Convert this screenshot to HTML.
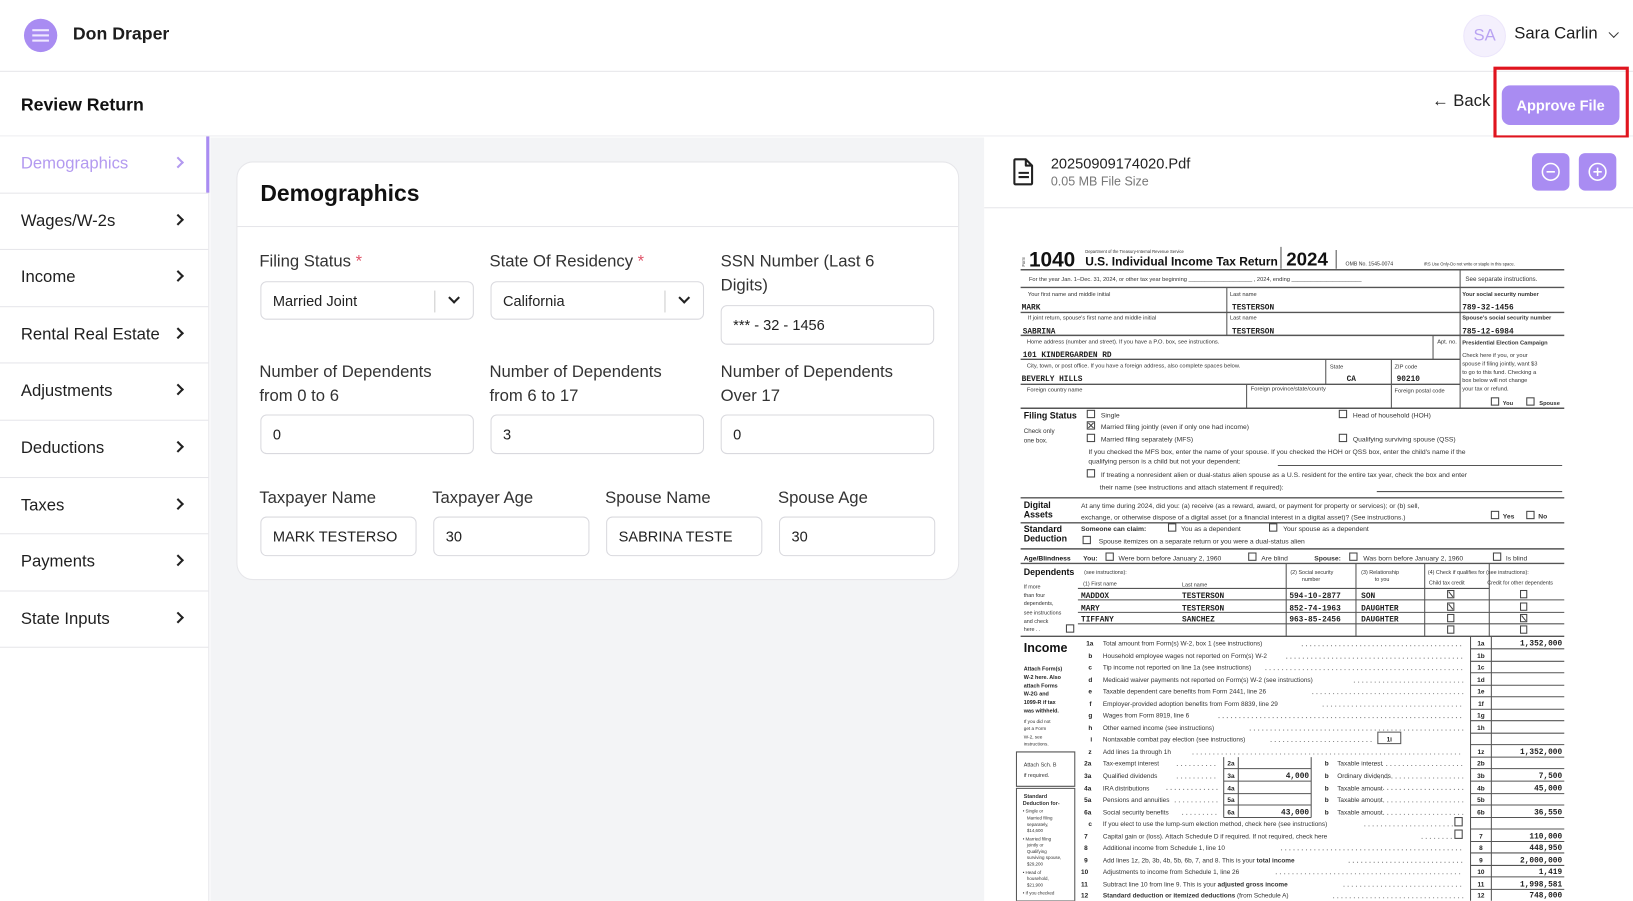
<!DOCTYPE html>
<html><head><meta charset="utf-8">
<style>
*{box-sizing:border-box;margin:0;padding:0}
html,body{width:1633px;height:900px;overflow:hidden;background:#fff;font-family:"Liberation Sans",sans-serif;color:#1f1f1f}
#root{position:absolute;left:0;top:0;width:1568px;height:865px;transform:scale(1.04145);transform-origin:0 0;background:#fff}
.abs{position:absolute}
.hdr{left:0;top:0;width:1568px;height:69px;border-bottom:1px solid #e6e6ea}
.sub{left:0;top:69px;width:1568px;height:62px;border-bottom:1px solid #ececf0}
.side{left:0;top:131px;width:201px;height:734px;border-right:1px solid #e6e6ea;background:#fff}
.item{position:absolute;left:0;width:200px;height:54.6px;border-bottom:1px solid #e6e6ea;font-size:16px;line-height:54px;padding-left:20px}
.item .chev{position:absolute;left:167px;top:21px;width:8px;height:8px;border-right:2px solid #222;border-top:2px solid #222;transform:rotate(45deg)}
.main{left:202px;top:132px;width:743px;height:733px;background:#f3f4f6}
.card{left:227px;top:155px;width:694px;height:402px;background:#fff;border:1px solid #e6e6ea;border-radius:16px}
.lbl{position:absolute;font-size:16px;color:#333;line-height:23px}
.lbl .st{color:#e0556a}
.inp{position:absolute;border:1px solid #d9d9de;border-radius:6px;height:38px;font-size:14px;line-height:36px;padding-left:11px;color:#222;background:#fff;overflow:hidden;white-space:nowrap}
.sel .bar{position:absolute;right:36px;top:8px;width:1px;height:21px;background:#ccc}
.sel .dc{position:absolute;right:14px;top:11px;width:8px;height:8px;border-right:2px solid #222;border-bottom:2px solid #222;transform:rotate(45deg)}
.pbtn{background:#a98cf2;border-radius:6px}
</style></head><body>
<div id="root">
 <div class="abs hdr">
  <div class="abs" style="left:23px;top:18px;width:32px;height:32px;border-radius:50%;background:#a98cf2"></div>
  <div class="abs" style="left:31px;top:28px;width:16px;height:2px;background:#efe8ff;box-shadow:0 5px 0 #efe8ff,0 10px 0 #efe8ff"></div>
  <div class="abs" style="left:70px;top:23px;font-size:17px;font-weight:bold;color:#1d1d1d">Don Draper</div>
  <div class="abs" style="left:1405px;top:14px;width:41px;height:41px;border-radius:50%;background:#f4f0fd;border:1px solid #ece6fb;color:#b9a3f2;font-size:16px;text-align:center;line-height:39px">SA</div>
  <div class="abs" style="left:1454px;top:24px;font-size:16px;color:#1d1d1d">Sara Carlin</div>
  <div class="abs" style="left:1546px;top:28px;width:7px;height:7px;border-right:1.6px solid #333;border-bottom:1.6px solid #333;transform:rotate(45deg)"></div>
 </div>
 <div class="abs sub">
  <div class="abs" style="left:20px;top:22px;font-size:17px;font-weight:bold;color:#111">Review Return</div>
  <div class="abs" style="left:1375px;top:20px;font-size:16px;color:#222">&#8592; Back</div>
  <div class="abs pbtn" style="left:1442px;top:13px;width:113px;height:38px;border-radius:8px;color:#fff;font-weight:bold;font-size:14px;text-align:center;line-height:38px">Approve File</div>
  <div class="abs" style="left:1434px;top:-5px;width:130px;height:69px;border:3px solid #e0141e"></div>
 </div>
 <div class="abs side">
  <div class="item" style="top:0;color:#b39af0">Demographics<span class="chev" style="border-color:#b39af0"></span></div>
  <div class="item" style="top:54.6px">Wages/W-2s<span class="chev"></span></div>
  <div class="item" style="top:109.2px">Income<span class="chev"></span></div>
  <div class="item" style="top:163.8px">Rental Real Estate<span class="chev"></span></div>
  <div class="item" style="top:218.4px">Adjustments<span class="chev"></span></div>
  <div class="item" style="top:273px">Deductions<span class="chev"></span></div>
  <div class="item" style="top:327.6px">Taxes<span class="chev"></span></div>
  <div class="item" style="top:382.2px">Payments<span class="chev"></span></div>
  <div class="item" style="top:436.8px">State Inputs<span class="chev"></span></div>
  <div class="abs" style="left:198px;top:0;width:3px;height:54px;background:#a98cf2"></div>
 </div>
 <div class="abs main"></div>
 <div class="abs card">
  <div class="abs" style="left:22px;top:17px;font-size:22px;font-weight:bold;color:#111">Demographics</div>
  <div class="abs" style="left:0;top:61px;width:692px;height:1px;background:#e6e6ea"></div>
 </div>
 <div class="lbl" style="left:249px;top:240px">Filing Status <span class="st">*</span></div>
 <div class="lbl" style="left:470px;top:240px">State Of Residency <span class="st">*</span></div>
 <div class="lbl" style="left:692px;top:240px">SSN Number (Last 6<br>Digits)</div>
 <div class="inp sel" style="left:250px;top:270px;width:205px;height:37px">Married Joint<span class="bar"></span><span class="dc"></span></div>
 <div class="inp sel" style="left:471px;top:270px;width:205px;height:37px">California<span class="bar"></span><span class="dc"></span></div>
 <div class="inp" style="left:692px;top:293px;width:205px">*** - 32 - 1456</div>
 <div class="lbl" style="left:249px;top:346px">Number of Dependents<br>from 0 to 6</div>
 <div class="lbl" style="left:470px;top:346px">Number of Dependents<br>from 6 to 17</div>
 <div class="lbl" style="left:692px;top:346px">Number of Dependents<br>Over 17</div>
 <div class="inp" style="left:250px;top:398px;width:205px">0</div>
 <div class="inp" style="left:471px;top:398px;width:205px">3</div>
 <div class="inp" style="left:692px;top:398px;width:205px">0</div>
 <div class="lbl" style="left:249px;top:467px">Taxpayer Name</div>
 <div class="lbl" style="left:415px;top:467px">Taxpayer Age</div>
 <div class="lbl" style="left:581px;top:467px">Spouse Name</div>
 <div class="lbl" style="left:747px;top:467px">Spouse Age</div>
 <div class="inp" style="left:250px;top:496px;width:150px">MARK TESTERSO</div>
 <div class="inp" style="left:416px;top:496px;width:150px">30</div>
 <div class="inp" style="left:582px;top:496px;width:150px">SABRINA TESTE</div>
 <div class="inp" style="left:748px;top:496px;width:150px">30</div>

 <div class="abs" style="left:945px;top:132px;width:623px;height:68px;border-bottom:1px solid #e6e6ea;background:#fff"></div>
 <svg class="abs" style="left:972px;top:151px" width="22" height="28" viewBox="0 0 22 28"><path d="M3 2h10l6 6v17a1 1 0 0 1-1 1H3a1 1 0 0 1-1-1V3a1 1 0 0 1 1-1z M13 2v6h6" fill="none" stroke="#222" stroke-width="2" stroke-linejoin="round"/><path d="M6 15h10M6 19h10" stroke="#222" stroke-width="2"/></svg>
 <div class="abs" style="left:1009px;top:149px;font-size:14px;color:#222">20250909174020.Pdf</div>
 <div class="abs" style="left:1009px;top:167px;font-size:12px;color:#777">0.05 MB File Size</div>
 <div class="abs pbtn" style="left:1471px;top:147px;width:36px;height:36px"><svg width="36" height="36"><circle cx="18" cy="18" r="8" fill="none" stroke="#fff" stroke-width="1.5"/><path d="M14 18h8" stroke="#fff" stroke-width="1.5"/></svg></div>
 <div class="abs pbtn" style="left:1516px;top:147px;width:36px;height:36px"><svg width="36" height="36"><circle cx="18" cy="18" r="8" fill="none" stroke="#fff" stroke-width="1.5"/><path d="M14 18h8M18 14v8" stroke="#fff" stroke-width="1.5"/></svg></div>

 <svg class="abs" style="left:0;top:0" width="1568" height="865" viewBox="0 0 1568 865" font-family="Liberation Sans, sans-serif" fill="#333">
  <g stroke="#555" stroke-width="1" fill="none">
   <path d="M980 259H1502M980 276H1502M980 300H1502M980 322H1502M980 345H1402M980 369H1402M980 392H1502M980 478H1502M980 502H1502M980 527H1502M980 541H1502M980 611H1502" stroke-width="1.4"/>
   <path d="M1230 237V258M1283 240V258M1402 259V392M1178 276V322M1376 322V345M1273 345V369M1336 345V392M1197 369V392"/>
   <path d="M1227 447H1500M1322 472H1500M1035 565H1430M1035 576H1502M1035 588H1502M1035 599H1502M1235 541V611M1302 541V611M1368 541V611M1430 541V611"/>
   <path d="M1412 611V865M1432 611V865"/>
   <path d="M1412 623H1502M1412 635H1502M1412 646H1502M1412 658H1502M1412 669H1502M1412 681H1502M1412 692H1502M1412 704H1502M1412 715H1502M1412 727H1502M1412 738H1502M1412 750H1502M1412 762H1502M1412 773H1502M1412 785H1502M1412 796H1502M1412 808H1502M1412 819H1502M1412 831H1502M1412 842H1502M1412 854H1502"/>
   <path d="M1175 727V785M1189 727V785M1259 727V785M1175 738H1259M1175 750H1259M1175 762H1259M1175 773H1259M1175 785H1259"/>
   <path d="M1323 703H1345V714H1323ZM976 722H1032V755H976ZM976 757H1032V865H976Z"/>
   <g stroke="#888" stroke-dasharray="1 3">
    <path d="M1250 620H1405M1235 632H1405M1215 643H1405M1300 655H1405M1260 666H1405M1270 678H1405M1170 689H1405M1200 701H1405M1220 712H1320M1145 724H1405M1130 735H1170M1130 747H1170M1120 758H1170M1128 770H1170M1135 782H1170M1315 735H1405M1320 747H1405M1320 758H1405M1320 770H1405M1320 782H1405M1310 793H1395M1365 805H1395M1230 816H1405M1295 828H1405M1225 839H1405M1290 851H1405M1280 862H1405"/>
   </g>
   <g stroke="#444">
    <rect x="1044" y="394" width="7" height="7"/><rect x="1044" y="405" width="7" height="7"/><rect x="1044" y="417" width="7" height="7"/>
    <rect x="1286" y="394" width="7" height="7"/><rect x="1286" y="417" width="7" height="7"/><rect x="1044" y="451" width="7" height="7"/>
    <rect x="1432" y="382" width="7" height="7"/><rect x="1466" y="382" width="7" height="7"/>
    <rect x="1432" y="491" width="7" height="7"/><rect x="1466" y="491" width="7" height="7"/>
    <rect x="1122" y="503" width="7" height="7"/><rect x="1219" y="503" width="7" height="7"/><rect x="1040" y="515" width="7" height="7"/>
    <rect x="1062" y="531" width="7" height="7"/><rect x="1199" y="531" width="7" height="7"/><rect x="1296" y="531" width="7" height="7"/><rect x="1434" y="531" width="7" height="7"/>
    <rect x="1024" y="600" width="7" height="7"/>
    <rect x="1390" y="567" width="6" height="7"/><rect x="1390" y="579" width="6" height="7"/><rect x="1390" y="590" width="6" height="7"/><rect x="1390" y="601" width="6" height="7"/>
    <rect x="1460" y="567" width="6" height="7"/><rect x="1460" y="579" width="6" height="7"/><rect x="1460" y="590" width="6" height="7"/><rect x="1460" y="601" width="6" height="7"/>
    <rect x="1397" y="785" width="7" height="8"/><rect x="1397" y="797" width="7" height="8"/>
    <path d="M1045 406l5 5M1050 406l-5 5M1391 568l4 5M1391 580l4 5M1461 591l4 5"/>
   </g>
  </g>
  <text x="984" y="256" font-size="4" transform="rotate(-90 984 256)">Form</text>
  <text x="988" y="256" font-size="20" font-weight="bold" fill="#111">1040</text>
  <text x="1042" y="243" font-size="4">Department of the Treasury-Internal Revenue Service</text>
  <text x="1042" y="255" font-size="11.5" font-weight="bold" fill="#111">U.S. Individual Income Tax Return</text>
  <text x="1235" y="255" font-size="18" font-weight="bold" fill="#111">2024</text>
  <text x="1292" y="255" font-size="5">OMB No. 1545-0074</text>
  <text x="1367" y="255" font-size="4">IRS Use Only-Do not write or staple in this space.</text>
  <g font-size="5.5">
   <text x="988" y="270">For the year Jan. 1–Dec. 31, 2024, or other tax year beginning ____________________ , 2024, ending ______________________</text>
   <text x="1407" y="270" font-size="6">See separate instructions.</text>
   <text x="987" y="284">Your first name and middle initial</text><text x="1181" y="284">Last name</text>
   <text x="1404" y="284" font-weight="bold">Your social security number</text>
   <text x="987" y="307">If joint return, spouse's first name and middle initial</text><text x="1181" y="307">Last name</text>
   <text x="1404" y="307" font-weight="bold">Spouse's social security number</text>
   <text x="986" y="330">Home address (number and street). If you have a P.O. box, see instructions.</text><text x="1380" y="330">Apt. no.</text>
   <text x="1404" y="331" font-weight="bold">Presidential Election Campaign</text>
   <text x="986" y="353">City, town, or post office. If you have a foreign address, also complete spaces below.</text><text x="1277" y="354">State</text><text x="1339" y="354">ZIP code</text>
   <text x="986" y="376">Foreign country name</text><text x="1201" y="375">Foreign province/state/county</text><text x="1339" y="377">Foreign postal code</text>
   <text x="1404" y="343">Check here if you, or your</text><text x="1404" y="351">spouse if filing jointly, want $3</text><text x="1404" y="359">to go to this fund. Checking a</text><text x="1404" y="367">box below will not change</text><text x="1404" y="375">your tax or refund.</text>
   <text x="1443" y="389" font-weight="bold">You</text><text x="1478" y="389" font-weight="bold">Spouse</text>
  </g>
  <g font-family="Liberation Mono, monospace" font-size="7.5" font-weight="bold" fill="#222">
   <text x="981" y="297">MARK</text><text x="1183" y="297">TESTERSON</text><text x="1404" y="297">789-32-1456</text>
   <text x="982" y="320">SABRINA</text><text x="1183" y="320">TESTERSON</text><text x="1404" y="320">785-12-6984</text>
   <text x="982" y="343">101 KINDERGARDEN RD</text>
   <text x="981" y="366">BEVERLY HILLS</text><text x="1293" y="366">CA</text><text x="1341" y="366">90210</text>
   <text x="1038" y="574">MADDOX</text><text x="1135" y="574">TESTERSON</text><text x="1238" y="574">594-10-2877</text><text x="1307" y="574">SON</text>
   <text x="1038" y="586">MARY</text><text x="1135" y="586">TESTERSON</text><text x="1238" y="586">852-74-1963</text><text x="1307" y="586">DAUGHTER</text>
   <text x="1038" y="597">TIFFANY</text><text x="1135" y="597">SANCHEZ</text><text x="1238" y="597">963-85-2456</text><text x="1307" y="597">DAUGHTER</text>
   <g text-anchor="end">
    <text x="1500" y="620">1,352,000</text><text x="1500" y="724">1,352,000</text><text x="1500" y="747">7,500</text><text x="1500" y="759">45,000</text>
    <text x="1500" y="782">36,550</text><text x="1500" y="805">110,000</text><text x="1500" y="816">448,950</text><text x="1500" y="828">2,000,000</text>
    <text x="1500" y="839">1,419</text><text x="1500" y="851">1,998,581</text><text x="1500" y="862">748,000</text>
    <text x="1257" y="747">4,000</text><text x="1257" y="782">43,000</text>
   </g>
  </g>
  <g font-size="6.5">
   <text x="983" y="402" font-size="8.5" font-weight="bold" fill="#111">Filing Status</text>
   <text x="983" y="416" font-size="6">Check only</text><text x="983" y="425" font-size="6">one box.</text>
   <text x="1057" y="401">Single</text><text x="1057" y="412">Married filing jointly (even if only one had income)</text><text x="1057" y="424">Married filing separately (MFS)</text>
   <text x="1299" y="401">Head of household (HOH)</text><text x="1299" y="424">Qualifying surviving spouse (QSS)</text>
   <text x="1045" y="436">If you checked the MFS box, enter the name of your spouse. If you checked the HOH or QSS box, enter the child's name if the</text>
   <text x="1045" y="445">qualifying person is a child but not your dependent:</text>
   <text x="1057" y="458">If treating a nonresident alien or dual-status alien spouse as a U.S. resident for the entire tax year, check the box and enter</text>
   <text x="1056" y="470">their name (see instructions and attach statement if required):</text>
   <text x="983" y="488" font-size="8.5" font-weight="bold" fill="#111">Digital</text><text x="983" y="497" font-size="8.5" font-weight="bold" fill="#111">Assets</text>
   <text x="1038" y="488">At any time during 2024, did you: (a) receive (as a reward, award, or payment for property or services); or (b) sell,</text>
   <text x="1038" y="499">exchange, or otherwise dispose of a digital asset (or a financial interest in a digital asset)? (See instructions.)</text>
   <text x="1443" y="498" font-weight="bold">Yes</text><text x="1477" y="498" font-weight="bold">No</text>
   <text x="983" y="511" font-size="8.5" font-weight="bold" fill="#111">Standard</text><text x="983" y="520" font-size="8.5" font-weight="bold" fill="#111">Deduction</text>
   <text x="1038" y="510" font-weight="bold">Someone can claim:</text><text x="1134" y="510">You as a dependent</text><text x="1232" y="510">Your spouse as a dependent</text>
   <text x="1055" y="522">Spouse itemizes on a separate return or you were a dual-status alien</text>
   <text x="983" y="538" font-weight="bold" fill="#111">Age/Blindness</text><text x="1040" y="538" font-weight="bold">You:</text><text x="1074" y="538">Were born before January 2, 1960</text><text x="1211" y="538">Are blind</text>
   <text x="1262" y="538" font-weight="bold">Spouse:</text><text x="1309" y="538">Was born before January 2, 1960</text><text x="1446" y="538">Is blind</text>
   <text x="983" y="552" font-size="8.5" font-weight="bold" fill="#111">Dependents</text>
  </g>
  <g font-size="5.2">
   <text x="1041" y="551">(see instructions):</text><text x="1040" y="562">(1) First name</text><text x="1135" y="563">Last name</text>
   <text x="1239" y="551">(2) Social security</text><text x="1250" y="558">number</text><text x="1307" y="551">(3) Relationship</text><text x="1320" y="558">to you</text>
   <text x="1371" y="551">(4) Check if qualifies for (see instructions):</text><text x="1372" y="561">Child tax credit</text><text x="1428" y="561">Credit for other dependents</text>
   <text x="983" y="565">If more</text><text x="983" y="573">than four</text><text x="983" y="581">dependents,</text><text x="983" y="590">see instructions</text><text x="983" y="598">and check</text><text x="983" y="606">here  . .</text>
   <g font-weight="bold" fill="#222"><text x="983" y="644">Attach Form(s)</text><text x="983" y="652">W-2 here. Also</text><text x="983" y="660">attach Forms</text><text x="983" y="668">W-2G and</text><text x="983" y="676">1099-R if tax</text><text x="983" y="684">was withheld.</text></g>
   <text x="983" y="694" font-size="4.5">If you did not</text><text x="983" y="701" font-size="4.5">get a Form</text><text x="983" y="709" font-size="4.5">W-2, see</text><text x="983" y="716" font-size="4.5">instructions.</text>
   <text x="983" y="736">Attach Sch. B</text><text x="983" y="746">if required.</text>
   <text x="983" y="766" font-weight="bold">Standard</text><text x="982" y="773" font-weight="bold">Deduction for-</text>
   <g font-size="4.3"><text x="982" y="780">• Single or</text><text x="986" y="787">Married filing</text><text x="986" y="793">separately,</text><text x="986" y="799">$14,600</text><text x="982" y="807">• Married filing</text><text x="986" y="813">jointly or</text><text x="986" y="819">Qualifying</text><text x="986" y="825">surviving spouse,</text><text x="986" y="831">$29,200</text><text x="982" y="839">• Head of</text><text x="986" y="845">household,</text><text x="986" y="851">$21,900</text><text x="982" y="859">• If you checked</text></g>
  </g>
  <text x="983" y="626" font-size="12" font-weight="bold" fill="#111">Income</text>
  <g font-size="6.2">
   <g font-weight="bold" fill="#222">
    <text x="1043" y="620">1a</text><text x="1045" y="632">b</text><text x="1045" y="643">c</text><text x="1045" y="655">d</text><text x="1045" y="666">e</text><text x="1046" y="678">f</text><text x="1045" y="689">g</text><text x="1045" y="701">h</text><text x="1047" y="712">i</text><text x="1045" y="724">z</text>
    <text x="1041" y="735">2a</text><text x="1041" y="747">3a</text><text x="1041" y="759">4a</text><text x="1041" y="770">5a</text><text x="1041" y="782">6a</text><text x="1045" y="793">c</text><text x="1041" y="805">7</text><text x="1041" y="816">8</text><text x="1041" y="828">9</text><text x="1038" y="839">10</text><text x="1038" y="851">11</text><text x="1038" y="862">12</text>
    <g text-anchor="middle"><text x="1422" y="620">1a</text><text x="1422" y="632">1b</text><text x="1422" y="643">1c</text><text x="1422" y="655">1d</text><text x="1422" y="666">1e</text><text x="1422" y="678">1f</text><text x="1422" y="689">1g</text><text x="1422" y="701">1h</text><text x="1422" y="724">1z</text><text x="1422" y="735">2b</text><text x="1422" y="747">3b</text><text x="1422" y="759">4b</text><text x="1422" y="770">5b</text><text x="1422" y="782">6b</text><text x="1422" y="805">7</text><text x="1422" y="816">8</text><text x="1422" y="828">9</text><text x="1422" y="839">10</text><text x="1422" y="851">11</text><text x="1422" y="862">12</text>
    <text x="1182" y="735">2a</text><text x="1182" y="747">3a</text><text x="1182" y="759">4a</text><text x="1182" y="770">5a</text><text x="1182" y="782">6a</text><text x="1334" y="712">1i</text></g>
    <text x="1272" y="735">b</text><text x="1272" y="747">b</text><text x="1272" y="759">b</text><text x="1272" y="770">b</text><text x="1272" y="782">b</text>
   </g>
   <text x="1059" y="620">Total amount from Form(s) W-2, box 1 (see instructions)</text>
   <text x="1059" y="632">Household employee wages not reported on Form(s) W-2</text>
   <text x="1059" y="643">Tip income not reported on line 1a (see instructions)</text>
   <text x="1059" y="655">Medicaid waiver payments not reported on Form(s) W-2 (see instructions)</text>
   <text x="1059" y="666">Taxable dependent care benefits from Form 2441, line 26</text>
   <text x="1059" y="678">Employer-provided adoption benefits from Form 8839, line 29</text>
   <text x="1059" y="689">Wages from Form 8919, line 6</text>
   <text x="1059" y="701">Other earned income (see instructions)</text>
   <text x="1059" y="712">Nontaxable combat pay election (see instructions)</text>
   <text x="1059" y="724">Add lines 1a through 1h</text>
   <text x="1059" y="735">Tax-exempt interest</text><text x="1059" y="747">Qualified dividends</text><text x="1059" y="759">IRA distributions</text><text x="1059" y="770">Pensions and annuities</text><text x="1059" y="782">Social security benefits</text>
   <text x="1284" y="735">Taxable interest</text><text x="1284" y="747">Ordinary dividends</text><text x="1284" y="759">Taxable amount</text><text x="1284" y="770">Taxable amount</text><text x="1284" y="782">Taxable amount</text>
   <text x="1059" y="793">If you elect to use the lump-sum election method, check here (see instructions)</text>
   <text x="1059" y="805">Capital gain or (loss). Attach Schedule D if required. If not required, check here</text>
   <text x="1059" y="816">Additional income from Schedule 1, line 10</text>
   <text x="1059" y="828">Add lines 1z, 2b, 3b, 4b, 5b, 6b, 7, and 8. This is your <tspan font-weight="bold">total income</tspan></text>
   <text x="1059" y="839">Adjustments to income from Schedule 1, line 26</text>
   <text x="1059" y="851">Subtract line 10 from line 9. This is your <tspan font-weight="bold">adjusted gross income</tspan></text>
   <text x="1059" y="862"><tspan font-weight="bold">Standard deduction or itemized deductions</tspan> (from Schedule A)</text>
  </g>
 </svg>
</div>
</body></html>
